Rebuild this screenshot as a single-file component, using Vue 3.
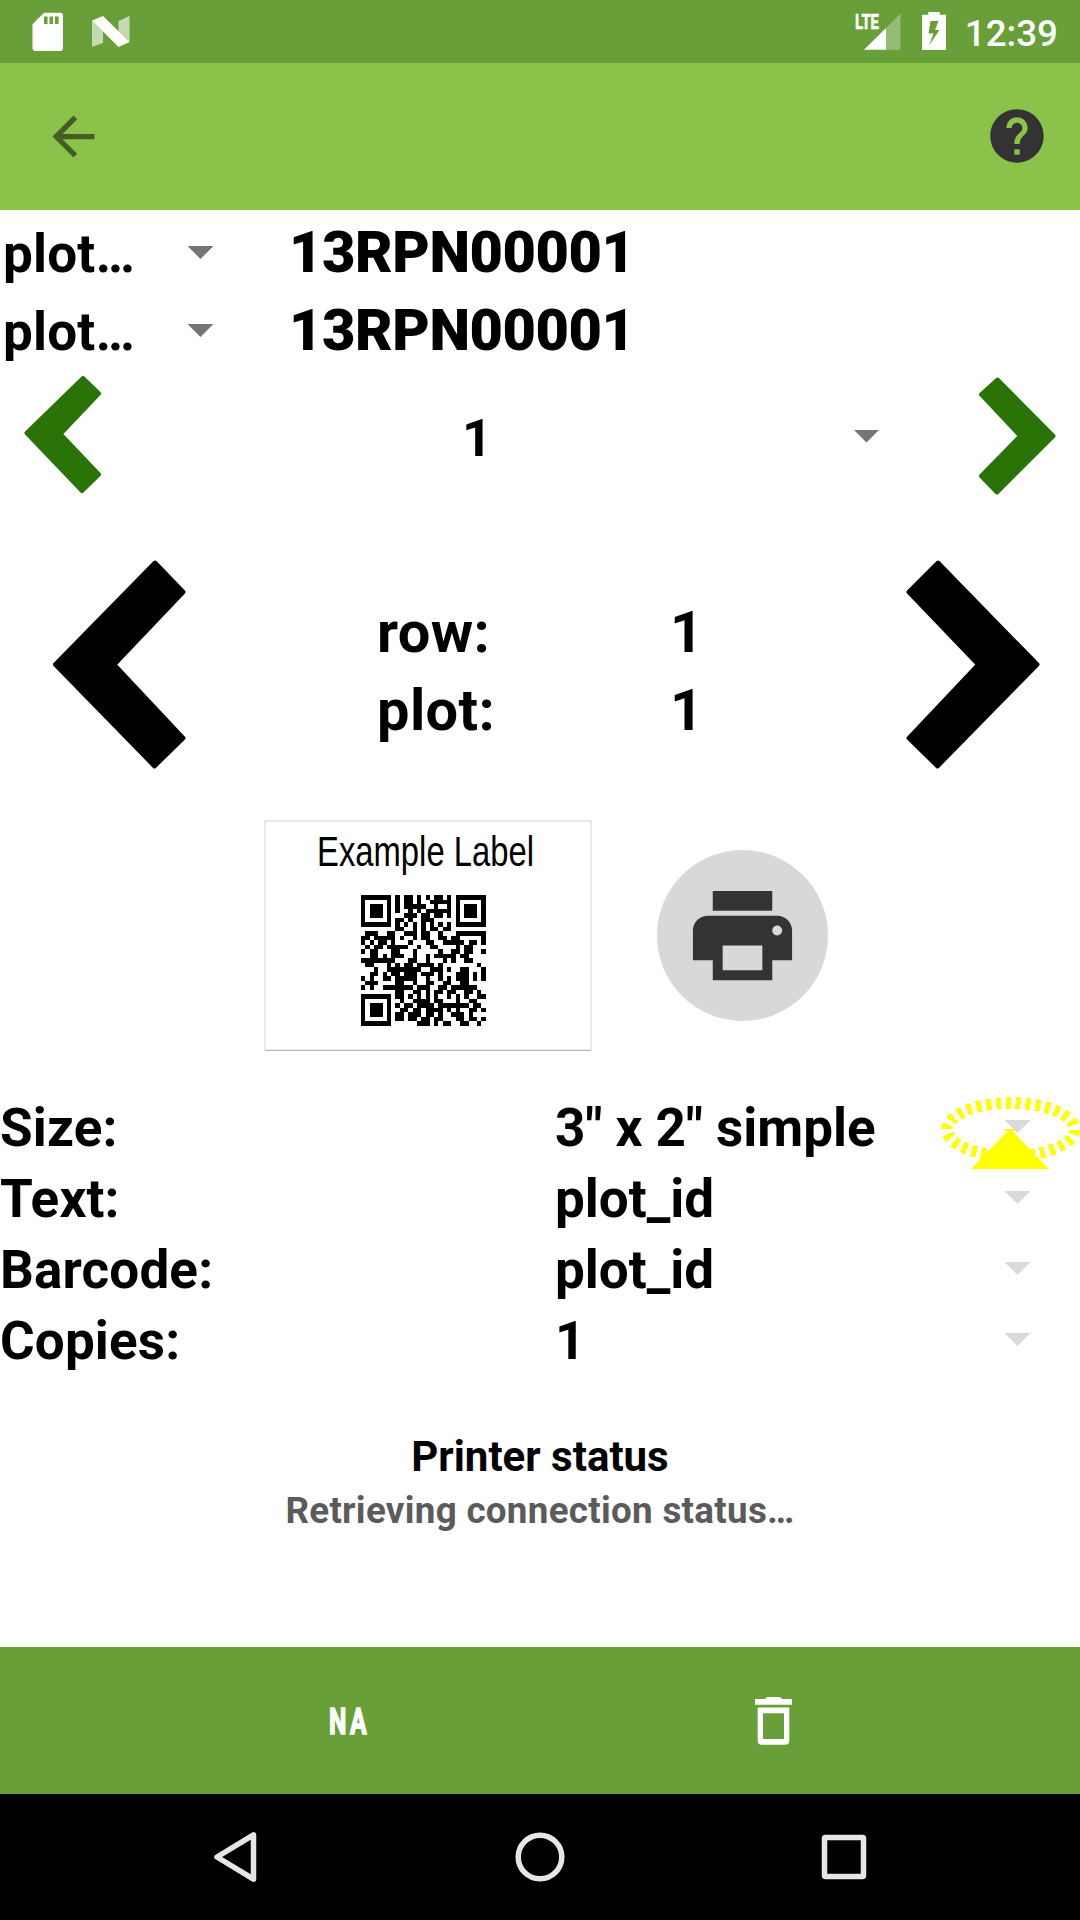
<script setup>
const fields = ['13RPN00001', '13RPN00001']
const position = [
  { name: 'row:', value: '1' },
  { name: 'plot:', value: '1' },
]
const settings = [
  { name: 'Size:', value: '3" x 2" simple', marked: true },
  { name: 'Text:', value: 'plot_id' },
  { name: 'Barcode:', value: 'plot_id' },
  { name: 'Copies:', value: '1' },
]
const qrRows = [
  '11111110101101010110101111111',
  '10000010101101001111101000001',
  '10111010101111100100101011101',
  '10111010100101011111101011101',
  '10111010001110110110101011101',
  '10000010110100111000001000001',
  '11111110101010101010101111111',
  '00000000110010101101100000000',
  '01110011001110110010001111111',
  '11011111010010110011011000001',
  '10101101000100011001111101101',
  '01011011111001001100001011000',
  '10110001100010000010011011001',
  '00110101110010010111110110000',
  '11111111000110010001010011000',
  '01100010101101111010000000010',
  '00010011111111001110100110001',
  '00110101101110111010001110101',
  '10100110111110010010101110101',
  '01110000110010011001100110000',
  '10100111111101110011011111100',
  '00000000110011010110110011010',
  '11111110110101010100101010011',
  '10000010010011110110001001100',
  '10111010101101111011111110110',
  '10111010011011011110101001101',
  '10111010110111011010011101000',
  '10000010110110110110001101101',
  '11111110000001110101100110010',
]
const qrPath = qrRows
  .map((row, y) => [...row].map((c, x) => (c === '1' ? `M${x} ${y}h1v1h-1z` : '')).join(''))
  .join('')
</script>

<template>
  <div class="screen">
    <header class="status">
      <svg class="sd" width="32" height="40" viewBox="0 0 32 40">
        <path fill="#fff" fill-rule="evenodd" d="M12 .7H28q3 0 3 3V36q0 3-3 3H3.500q-3 0-3-3V12.300ZM12 4.500v7.500h3.600V4.500Zm5.500 0v7.500h3.600V4.500Zm5.500 0v7.500h3.600V4.500Z" />
      </svg>
      <svg class="nougat" width="38" height="32" viewBox="0 0 38 32">
        <path fill="#fff" fill-opacity=".62" d="M0 4.500 11 15.500V27L0 31ZM26.500 5 37.500 0V26L26.500 15.500Z" />
        <path fill="#fff" d="M0 4.500 11 0 37.500 26 26.500 31Z" />
      </svg>
      <span class="grow"></span>
      <svg class="signal" width="46" height="38" viewBox="0 0 46 38">
        <path fill="#fff" fill-opacity=".3" d="M45.500.5V36.700H31V15Z" />
        <path fill="#fff" d="M31 15V36.700H9Z" />
        <text x="0" y="16" textLength="24" lengthAdjust="spacingAndGlyphs">LTE</text>
      </svg>
      <svg class="battery" width="24" height="38" viewBox="0 0 24 38">
        <path fill="#fff" fill-rule="evenodd" d="M6.300 0h11.500v2.800H24V38H0V2.800h6.300ZM8.500 9 6.500 21.500h5L7 33.500 17.500 18H13L16.500 9Z" />
      </svg>
      <time>12:39</time>
    </header>

    <nav class="appbar">
      <svg width="63" height="63" viewBox="0 0 24 24"><path fill="#455d25" d="M20 11H7.830l5.590-5.590L12 4l-8 8 8 8 1.410-1.410L7.830 13H20z" /></svg>
      <svg class="help" width="64" height="64" viewBox="0 0 24 24"><path fill="#333" d="M12 2C6.480 2 2 6.480 2 12s4.480 10 10 10 10-4.480 10-10S17.520 2 12 2zm1 17h-2v-2h2zm2.070-7.750-.9.920C13.450 12.900 13 13.500 13 15h-2v-.5c0-1.100.45-2.100 1.170-2.830l1.240-1.260c.37-.36.59-.86.59-1.410 0-1.100-.9-2-2-2s-2 .9-2 2H8c0-2.210 1.790-4 4-4s4 1.790 4 4c0 .88-.36 1.680-.93 2.250z" /></svg>
    </nav>

    <main>
      <section class="fields">
        <div v-for="(f, i) in fields" :key="i" class="field">
          <div class="spinner"><span>plot…</span><i class="caret"></i></div>
          <strong>{{ f }}</strong>
        </div>
      </section>

      <section class="range">
        <svg class="chevron" width="77" height="118" viewBox="0 0 77 118">
          <path fill="#2a7307" stroke="#2a7307" d="M2.500 57 59 2 75 17.500 36.500 58 75 98.500 58 115Z" />
        </svg>
        <div class="range-spinner"><span>1</span><i class="caret"></i></div>
        <svg class="chevron next" width="77" height="118" viewBox="0 0 77 118">
          <path fill="#2a7307" stroke="#2a7307" d="M74.500 59 18.500 2.500 2 17.500 41 59 2 99 18 115.500Z" />
        </svg>
      </section>

      <section class="plot">
        <svg class="chevron" width="134" height="210" viewBox="0 0 134 210">
          <path stroke="#000" d="M2 104.500 102 2.500 130.500 32 61.500 104.500 130.500 178 101.500 206.500Z" />
        </svg>
        <dl>
          <div v-for="p in position" :key="p.name"><dt>{{ p.name }}</dt><dd>{{ p.value }}</dd></div>
        </dl>
        <svg class="chevron" width="134" height="210" viewBox="0 0 134 210">
          <path stroke="#000" d="M131.500 104.500 32 2.500 2.500 32 72 104.500 2.500 178 31.500 206.500Z" />
        </svg>
      </section>

      <section class="preview">
        <svg class="label" width="328" height="232" viewBox="0 0 328 232">
          <rect x="1" y="1" width="326" height="229" fill="#fff" stroke="#e2e2e2" stroke-width="1.500" />
          <path stroke="#bbb" d="M1 230.500h326" />
          <text x="53" y="45.500" textLength="217" lengthAdjust="spacingAndGlyphs">Example Label</text>
          <path transform="translate(97 75) scale(4.300 4.510)" shape-rendering="crispEdges" :d="qrPath" />
        </svg>
        <button>
          <svg width="119" height="119" viewBox="0 0 24 24"><path fill="#333" d="M19 8H5c-1.660 0-3 1.340-3 3v6h4v4h12v-4h4v-6c0-1.660-1.340-3-3-3zm-3 11H8v-5h8zm3-7c-.55 0-1-.45-1-1s.45-1 1-1 1 .45 1 1-.45 1-1 1zM18 3H6v4h12z" /></svg>
        </button>
      </section>

      <section class="settings">
        <div v-for="s in settings" :key="s.name" class="setting">
          <span class="name">{{ s.name }}</span>
          <span class="value">{{ s.value }}</span>
          <i class="caret light"></i>
          <svg v-if="s.marked" class="mark" width="139" height="76" viewBox="0 0 139 76">
            <ellipse cx="69.700" cy="33.500" rx="63.800" ry="26.500" fill="none" stroke="#ff0" stroke-width="11.500" stroke-dasharray="5 4.850" shape-rendering="crispEdges" />
            <path fill="#ff0" d="M64 33h10v2h-2.500L108 73H30L66.500 35H64Z" />
          </svg>
        </div>
      </section>

      <section class="printer">
        <h2>Printer status</h2>
        <p>Retrieving connection status…</p>
      </section>
    </main>

    <footer class="toolbar">
      <svg class="na" width="38" height="30" viewBox="0 0 38 30">
        <text x="0" y="26.500" textLength="41" lengthAdjust="spacingAndGlyphs">NA</text>
      </svg>
      <svg class="trash" width="37" height="48" viewBox="0 0 37 48">
        <path fill="#fff" d="M10 2q1-2 3-2h11q2 0 3 2h10v5.700H0V2Z" />
        <path fill="#fff" fill-rule="evenodd" d="M2.700 10.500H34.300V43.500q0 4.300-4.300 4.300H7q-4.300 0-4.300-4.300ZM8 16.300V42H29V16.300Z" />
      </svg>
    </footer>

    <footer class="navbar">
      <svg width="50" height="54" viewBox="0 0 50 54"><path d="M5 27 41.500 4.800V49.200Z" /></svg>
      <svg width="54" height="54" viewBox="0 0 54 54"><circle cx="26" cy="27" r="21.800" /></svg>
      <svg width="50" height="54" viewBox="0 0 50 54"><rect x="5.500" y="7.500" width="39" height="39" rx="1" /></svg>
    </footer>
  </div>
</template>

<style>
body { background: #fff; }
</style>

<style scoped>
.screen {
  width: 1080px;
  height: 1920px;
  display: flex;
  flex-direction: column;
  font-family: Roboto, sans-serif;
  background: #fff;
  color: #000;
  overflow: hidden;
}
svg { display: block; flex: none; }
.grow { flex: 1; }
.status {
  height: 63px;
  box-sizing: border-box;
  display: flex;
  background: #689f38;
  padding: 12px 22px 0 32px;
}
.nougat { margin: 4px 0 0 28px; }
.signal { margin: 1px 21px 0 0; overflow: visible; }
.signal text { font: 700 21px Roboto, sans-serif; fill: #fff; stroke: #fff; stroke-width: .6px; }
.battery { margin-right: 19px; }
time { font-size: 36.75px; font-weight: 500; line-height: 44px; color: #fff; }
.appbar {
  height: 147px;
  box-sizing: border-box;
  display: flex;
  align-items: center;
  justify-content: space-between;
  background: #8bc34a;
  padding: 0 31px 0 42px;
}
.help { margin-bottom: 2px; }
main { height: 1437px; display: flex; flex-direction: column; font-weight: 700; }
.caret {
  width: 26px;
  height: 13px;
  background: #757575;
  clip-path: polygon(0 0, 100% 0, 50% 100%);
}
.caret.light { background: #dadada; }
.fields { padding-top: 3px; }
.field { height: 78px; display: flex; align-items: center; }
.spinner {
  width: 213.5px;
  display: flex;
  align-items: center;
  justify-content: space-between;
  font-size: 53px;
  margin-right: 75.5px;
}
.spinner span { padding: 3px 0 0 3px; letter-spacing: .2px; }
.spinner .caret { margin-top: 1px; }
.field strong { font-size: 57.75px; line-height: 78px; letter-spacing: -.45px; }
.range { height: 132px; display: flex; align-items: center; padding: 0 24px; font-size: 52.5px; }
.range .chevron { margin-bottom: 1px; }
.range .chevron.next { margin: 1px 0 0; }
.range-spinner { flex: 1; display: flex; align-items: center; padding-left: 361px; }
.range-spinner span { width: 391.5px; padding-top: 5px; }
.range-spinner .caret { margin-top: 2px; }
.chevron path { stroke-width: 4; stroke-linejoin: round; }
.plot {
  height: 210px;
  margin-top: 59px;
  padding: 0 40px 0 53px;
  display: flex;
}
dl { flex: 1; margin: 0; padding: 33px 0 0 190px; font-size: 57.75px; line-height: 78px; }
dl div { display: flex; }
dt { width: 293px; flex: none; letter-spacing: .4px; }
dd { margin: 0; }
.preview { height: 232px; margin-top: 50px; padding-left: 264px; display: flex; align-items: center; }
.label { overflow: visible; }
.label text { font: 42.5px "Liberation Sans", sans-serif; }
button {
  width: 171px;
  height: 171px;
  margin: 0 0 2px 65px;
  padding: 0;
  border: 0;
  border-radius: 50%;
  background: #d8d8d8;
  display: flex;
  align-items: center;
  justify-content: center;
}
.settings { margin-top: 40px; font-size: 53px; }
.setting { position: relative; height: 71px; display: flex; align-items: center; line-height: 71px; }
.setting .name, .setting .value { padding-top: 2px; }
.setting .name { width: 555px; letter-spacing: .15px; }
.setting .value { width: 449.5px; }
.setting .caret { margin-bottom: 2px; }
.mark { position: absolute; left: 941px; top: 4px; }
.printer { margin-top: 53px; text-align: center; }
h2 { margin: 0; font-size: 42px; line-height: 56px; }
p { margin: 0; font-size: 36.75px; line-height: 52px; letter-spacing: .3px; color: #5b5b5b; }
.toolbar { height: 147px; display: flex; background: #689f38; }
.na { margin: 60px 0 0 329px; overflow: visible; }
.na text { font: 700 36.5px Roboto, sans-serif; letter-spacing: 5px; fill: #fff; stroke: #fff; stroke-width: 1.5px; }
.trash { margin: 50px 0 0 388px; }
.navbar { height: 126px; display: flex; align-items: center; justify-content: space-between; background: #000; padding: 0 211px 0 212px; }
.navbar svg { fill: none; stroke: #e6e6e6; stroke-width: 5.5px; stroke-linejoin: round; }
</style>
